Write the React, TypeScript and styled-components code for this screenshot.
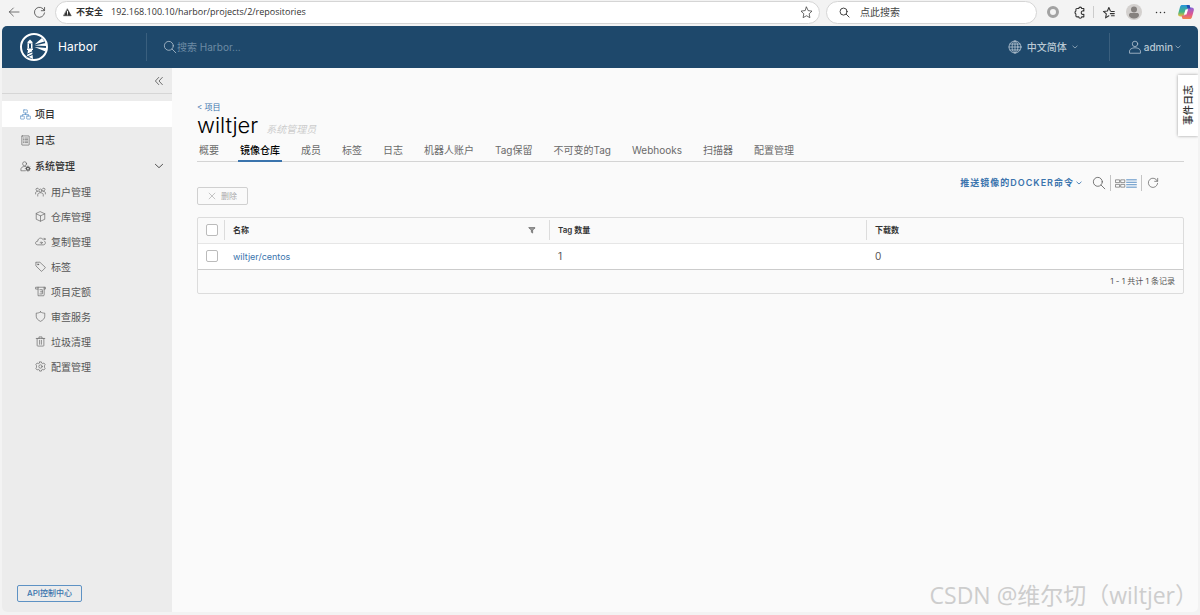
import React from "react";
import styled, { createGlobalStyle } from "styled-components";

const cjk = `"Noto Sans CJK SC", sans-serif`;

const GlobalStyle = createGlobalStyle`
  * { box-sizing: border-box; }
  body { margin: 0; background: #f3f3f3; color: #565656; font: 400 10px/16px Inter, ${cjk}; }
  button, input { font: inherit; color: inherit; }
  button { background: none; border: 0; padding: 0; cursor: pointer; }
  input { border: 0; background: none; padding: 0; min-width: 0; outline: none; }
  a { color: inherit; text-decoration: none; }
  ul { list-style: none; margin: 0; padding: 0; }
  h1 { margin: 0; }
`;

/* ---------- icons ---------- */

const Svg = styled.svg<{ $size: number; $weight?: number }>`
  display: block;
  flex: none;
  width: ${(p) => p.$size}px;
  height: ${(p) => p.$size}px;
  fill: none;
  stroke: currentColor;
  stroke-width: ${(p) => p.$weight ?? 2};
  stroke-linecap: round;
  stroke-linejoin: round;
`;

const shapes = {
  back: <path d="M33 18H4M16 6L4 18l12 12" />,
  reload: <path d="M31 12A14 14 0 1 0 32 19M32 4v9h-9" />,
  star: <path d="M18 3l4.600 9.800 10.600 1.400-7.800 7.400 2 10.600L18 27l-9.400 5.200 2-10.600L2.800 14.200l10.600-1.400z" />,
  search: (
    <>
      <circle cx="15" cy="15" r="11.500" />
      <path d="M23.500 23.500L33 33" />
    </>
  ),
  puzzle: <path d="M11 7h5a4 4 0 0 1 8 0h6v7a5 5 0 1 0 0 9v7h-6a4 4 0 0 1-8 0h-5a3 3 0 0 1-3-3v-5a4.500 4.500 0 0 1 0-8v-4a3 3 0 0 1 3-3z" />,
  favorites: (
    <path d="M19 27l-9 6 2-11-8-7 11-1 4-10 4 9M25 15h9M23 21h11M26 27h8" />
  ),
  globe: (
    <>
      <circle cx="18" cy="18" r="15.500" />
      <ellipse cx="18" cy="18" rx="7.500" ry="15.500" />
      <path d="M18 2.500v31M2.500 18h31M5 10.500h26M5 25.500h26" />
    </>
  ),
  user: (
    <>
      <circle cx="18" cy="10" r="7" />
      <path d="M4 33v-5c0-4 6-8 14-8s14 4 14 8v5z" />
    </>
  ),
  down: <path d="M5 12l13 12 13-12" />,
  collapse: <path d="M17 5L5 18l12 13M30 5L18 18l12 13" />,
  organization: (
    <>
      <rect x="12" y="3" width="12" height="10" rx="1" />
      <rect x="2" y="23" width="12" height="10" rx="1" />
      <rect x="22" y="23" width="12" height="10" rx="1" />
      <path d="M18 13v5M8 23v-5h20v5" />
    </>
  ),
  list: (
    <>
      <rect x="6" y="3" width="24" height="30" rx="1" />
      <path d="M11 10h2M11 15h2M11 20h2M11 25h2M17 10h8M17 15h8M17 20h8M17 25h8" />
    </>
  ),
  admin: (
    <>
      <circle cx="15" cy="9" r="6.500" />
      <path d="M17 32H3v-6c0-4 5-8 12-8 2 0 4 .500 5 1" />
      <circle cx="26" cy="25" r="5" strokeWidth="4" />
      <path d="M26 16v3M26 31v3M17 25h3M32 25h3M20 19l2 2M30 29l2 2M32 19l-2 2M22 29l-2 2" />
    </>
  ),
  users: (
    <>
      <circle cx="18" cy="15" r="5" />
      <path d="M9 33v-5c0-3 4-6 9-6s9 3 9 6v5" />
      <path d="M12 10a4.500 4.500 0 1 0-4 6M24 10a4.500 4.500 0 1 1 4 6M2 26v-4c0-2 2-4 6-4h2M34 26v-4c0-2-2-4-6-4h-2" />
    </>
  ),
  cube: <path d="M18 2.500L32 9v18l-14 6.500L4 27V9zM4 9l14 7 14-7M18 16v17" />,
  cloud: (
    <path d="M31 17c2 2 3 3 3 5 0 4-3 7-7 7H9c-4 0-7-2-7-6s3-6 7-6c0-6 4-10 9-10 3 0 5 1 7 3M17 22h7M21 19l3 3-3 3M27 10h7M31 7l3 3-3 3" />
  ),
  tag: (
    <>
      <path d="M3 5v11l17 17c1 1 2 1 3 0l10-10c1-1 1-2 0-3L16 4H4z" />
      <circle cx="10" cy="11" r="2" />
    </>
  ),
  quota: (
    <path d="M10 10H2V4h32v6h-4M10 4v28h17c2 0 3-1 3-3V4M16 12h8v14h-8M18 19h6" />
  ),
  shield: <path d="M18 3c4 3 9 4 14 4v10c0 8-6 13-14 17C10 30 4 25 4 17V7c5 0 10-1 14-4z" />,
  trash: <path d="M4 8h28M13 8V3h10v5M7 8v23c0 1 1 2 2 2h18c1 0 2-1 2-2V8M15 14v13M21 14v13" />,
  cog: (
    <>
      <circle cx="18" cy="18" r="5.500" />
      <path d="M15 3h6l1 4 3 1.500 4-2 4 5-2 4v5l2 4-4 5-4-2-3 1.500-1 4h-6l-1-4-3-1.500-4 2-4-5 2-4v-5l-2-4 4-5 4 2L14 7z" />
    </>
  ),
  close: <path d="M5 5l26 26M31 5L5 31" />,
  cards: (
    <path d="M3 6h12v9H3zM20 6h12v9H20zM3 21h12v9H3zM20 21h12v9H20z" />
  ),
  rows: <path d="M2 6h32M2 14h32M2 22h32M2 30h32" />,
};

type IconName = keyof typeof shapes;

const Icon = ({ name, size = 11, weight }: { name: IconName; size?: number; weight?: number }) => (
  <Svg $size={size} $weight={weight} viewBox="0 0 36 36" aria-hidden="true">
    {shapes[name]}
  </Svg>
);

const HarborLogo = () => (
  <Svg $size={30} viewBox="0 0 60 60" aria-hidden="true">
    <circle cx="30" cy="30" r="26" stroke="#fff" strokeWidth="4" />
    <g fill="#fff" stroke="none">
      <path d="M17 20l5-5 5 5v3H17zM16 33h12v3H16zM18 36h8l2 18-12-6z" />
      <path d="M17 23h3v10h-3zM24 23h3v10h-3z" />
      <path d="M31 25L46 12l5 7zM31 27l23-5 1 6zM31 30l24 2-2 7z" />
    </g>
    <path d="M17 44l9-4M16 50l11-5" stroke="#1e486b" strokeWidth="2" />
  </Svg>
);

const CopilotLogo = () => (
  <Svg $size={16} viewBox="0 0 32 32" aria-hidden="true">
    <defs>
      <linearGradient id="cool" x1="0" y1="0" x2="0" y2="1">
        <stop offset="0" stopColor="#2596dc" />
        <stop offset=".6" stopColor="#45b584" />
        <stop offset="1" stopColor="#f2bd35" />
      </linearGradient>
      <linearGradient id="warm" x1="0" y1="0" x2="0" y2="1">
        <stop offset="0" stopColor="#8a63d8" />
        <stop offset=".6" stopColor="#e0568f" />
        <stop offset="1" stopColor="#f2874b" />
      </linearGradient>
    </defs>
    <g stroke="none">
      <path d="M9 2h12c2 0 3 1 3 4l1 3h-4c-3 0-4 2-5 5l-3 7c-1 3-3 4-5 4H5c-4 0-6-3-4-8L4 6c1-3 2-4 5-4z" fill="url(#cool)" />
      <path d="M23 30H11c-2 0-3-1-3-4l-1-3h4c3 0 4-2 5-5l3-7c1-3 3-4 5-4h3c4 0 6 3 4 8l-3 11c-1 3-2 4-5 4z" fill="url(#warm)" />
      <path d="M17 2h4c2 0 3 1 3 4l1 3h-6z" fill="#234fb3" />
      <path d="M15 11h5l-3 10h-5z" fill="#fff" />
    </g>
  </Svg>
);

/* ---------- browser bar ---------- */

const Page = styled.div`
  min-height: 100vh;
  display: flex;
  flex-direction: column;
  padding: 0 2px 3px;
`;

const BrowserBar = styled.div`
  height: 26px;
  display: flex;
  align-items: center;
  gap: 6px;
  padding: 0 2px 2px;
  color: #333;
  font-family: "Open Sans", ${cjk};
`;

const BarButton = styled.button`
  display: grid;
  place-items: center;
  flex: none;
  width: 20px;
  height: 20px;
`;

const NavButtons = styled.div`
  display: flex;
  gap: 5px;
`;

const Pill = styled.label<{ $width?: number }>`
  display: flex;
  align-items: center;
  height: 23px;
  gap: ${(p) => (p.$width ? 10 : 4)}px;
  padding: 0 ${(p) => (p.$width ? 12 : 3)}px 0 ${(p) => (p.$width ? 12 : 7)}px;
  background: #fff;
  border: 1px solid #d5d5d5;
  border-radius: 12px;
  ${(p) => (p.$width ? `flex: none; width: ${p.$width}px;` : "flex: 1;")}
  input { flex: 1; }
  input::placeholder { color: #444; opacity: 1; }
`;

const Insecure = styled.strong`
  margin-right: 4px;
  font-weight: 700;
  font-size: 9px;
`;

const Address = styled.input`
  font-size: 9px;
`;

const BarTools = styled.div`
  display: flex;
  align-items: center;
  gap: 6px;
`;

const Ring = styled.span`
  width: 12px;
  height: 12px;
  border: 3px solid #a2a2a2;
  border-radius: 50%;
`;

const BarDivider = styled.span`
  width: 1px;
  height: 12px;
  margin: 0 -2px;
  background: #ccc;
`;

const Warning = () => (
  <Svg $size={9} viewBox="0 0 36 36" aria-hidden="true">
    <path d="M18 4l15 27H3z" fill="#333" stroke="#333" />
    <path d="M18 13v9M18 27v0" stroke="#fff" strokeWidth="4" />
  </Svg>
);

const Avatar = () => (
  <Svg $size={16} viewBox="0 0 32 32" aria-hidden="true">
    <g stroke="none">
      <circle cx="16" cy="16" r="16" fill="#d3d0ce" />
      <circle cx="16" cy="11" r="6" fill="#85817e" />
      <path d="M6 22c0-3 2-4 4-4h12c2 0 4 1 4 4 0 4-5 7-10 7S6 26 6 22z" fill="#85817e" />
    </g>
  </Svg>
);

const Dots = () => (
  <Svg $size={11} $weight={5} viewBox="0 0 36 36" aria-hidden="true">
    <path d="M5 18h0M18 18h0M31 18h0" />
  </Svg>
);

/* ---------- application shell ---------- */

const Shell = styled.div`
  position: relative;
  flex: 1;
  display: flex;
  flex-direction: column;
  border-radius: 5px;
  overflow: hidden;
  background: #fafafa;
`;

const Header = styled.header`
  height: 42px;
  display: flex;
  align-items: center;
  padding: 0 17px;
  background: #1e486b;
  color: #b9c8d4;
`;

const Brand = styled.a`
  width: 128px;
  height: 28px;
  display: flex;
  align-items: center;
  gap: 9px;
  border-right: 1px solid #3a5f7e;
  color: #fff;
  font-size: 12px;
`;

const HeaderSearch = styled.label`
  flex: 1;
  display: flex;
  align-items: center;
  margin-left: 16px;
  input { flex: 1; }
  input::placeholder { color: #6d8ba4; opacity: 1; }
`;

const HeaderMenu = styled.button<{ $gap: number }>`
  display: flex;
  align-items: center;
  gap: ${(p) => p.$gap}px;
  font-weight: 500;
`;

const HeaderDivider = styled.span`
  width: 1px;
  height: 28px;
  margin: 0 18px 0 31px;
  background: #3a5f7e;
`;

const Body = styled.div`
  flex: 1;
  display: flex;
`;

const Sidebar = styled.nav`
  width: 170px;
  flex: none;
  display: flex;
  flex-direction: column;
  align-items: flex-start;
  background: #ececec;
  ul { width: 100%; }
`;

const CollapseRow = styled.div`
  width: 100%;
  height: 26px;
  margin-bottom: 7px;
  padding-right: 8px;
  display: flex;
  align-items: center;
  justify-content: flex-end;
  border-bottom: 1px solid #d6d6d6;
`;

const NavLink = styled.a<{ $active?: boolean; $child?: boolean }>`
  display: flex;
  align-items: center;
  gap: ${(p) => (p.$child ? 5 : 4)}px;
  height: ${(p) => (p.$child ? 25 : 26)}px;
  padding: 0 8px 0 ${(p) => (p.$child ? 33 : 18)}px;
  background: ${(p) => (p.$active ? "#fff" : "transparent")};
  font-weight: ${(p) => (p.$child ? 400 : 500)};
  color: ${(p) => (p.$child ? "#565656" : "#333")};
  > svg:first-child { color: ${(p) => (p.$active ? "#4a86c0" : "#555")}; }
  > svg:last-child { margin-left: auto; }
`;

const ApiButton = styled.a`
  margin: auto 0 10px 15px;
  height: 17px;
  padding: 0 9px;
  border: 1px solid #5e92c4;
  border-radius: 2px;
  color: #3a74ad;
  font-size: 8px;
  line-height: 15px;
  font-weight: 500;
`;

/* ---------- project page ---------- */

const Main = styled.main`
  flex: 1;
  min-width: 0;
  padding: 32px 14px 0 25px;
`;

const Crumb = styled.a`
  display: block;
  height: 14px;
  color: #3a74ad;
  font-size: 8px;
  line-height: 15px;
`;

const TitleRow = styled.div`
  display: flex;
  align-items: baseline;
  gap: 8px;
  height: 24px;
`;

const Title = styled.h1`
  color: #000;
  font-size: 22px;
  line-height: 22px;
  font-weight: 300;
`;

const Role = styled.em`
  color: #ccc;
`;

const Tabs = styled.ul`
  display: flex;
  gap: 17px;
  height: 24px;
  border-bottom: 1px solid #d4d4d4;
`;

const Tab = styled.a<{ $active?: boolean }>`
  display: block;
  height: 24px;
  padding: 0 2px;
  line-height: 24px;
  white-space: nowrap;
  color: ${(p) => (p.$active ? "#000" : "#6a6a6a")};
  font-weight: ${(p) => (p.$active ? 500 : 400)};
  border-bottom: 2px solid ${(p) => (p.$active ? "#3a74ad" : "transparent")};
`;

const Toolbar = styled.div`
  display: flex;
  justify-content: space-between;
  height: 55px;
  padding-right: 25px;
`;

const DeleteButton = styled.button`
  display: flex;
  align-items: center;
  align-self: flex-end;
  gap: 5px;
  height: 18px;
  margin-bottom: 12px;
  padding: 0 10px;
  border: 1px solid #d0d0d0;
  border-radius: 2px;
  color: #aaa;
  font-size: 8px;
  line-height: 16px;
`;

const ToolGroup = styled.div`
  display: flex;
  align-items: center;
  height: 16px;
  margin-top: 13px;
  color: #666;
`;

const DockerButton = styled.button`
  display: flex;
  align-items: center;
  gap: 2px;
  margin-right: 10px;
  color: #3a74ad;
  font-size: 9px;
  font-weight: 600;
  letter-spacing: 1px;
`;

const ViewSwitch = styled.span`
  display: flex;
  height: 16px;
  align-items: center;
  margin: 0 5px 0 4px;
  padding: 0 4px;
  border: solid #c4c4c4;
  border-width: 0 1px;
`;

const ToolButton = styled.button<{ $on?: boolean }>`
  color: ${(p) => (p.$on ? "#4a86c0" : "#555")};
`;

const GridFrame = styled.div`
  border: 1px solid #dcdcdc;
  border-radius: 2px;
`;

const Grid = styled.table`
  width: 100%;
  table-layout: fixed;
  border-collapse: collapse;
  text-align: left;
  th, td { padding: 0 8px; height: 26px; }
  th { height: 25px; color: #333; font-size: 8px; font-weight: 600; border-bottom: 1px solid #e6e6e6; }
  td { background: #fff; border-bottom: 1px solid #ccc; }
  th:first-child { width: 26px; }
  th:nth-child(2) { width: 33%; }
  th > div { display: flex; align-items: center; justify-content: space-between; height: 20px; }
  th + th > div { margin-left: -8px; padding: 0 5px 0 8px; border-left: 1px solid #dcdcdc; }
  td:nth-child(n + 2) { padding-left: 9px; }
  a { color: #3a74ad; font-size: 9px; }
`;

const Check = styled.input.attrs({ type: "checkbox" })`
  appearance: none;
  display: block;
  width: 12px;
  height: 12px;
  margin: 0;
  border: 1px solid #bbb;
  border-radius: 2px;
  background: #fff;
`;

const GridFooter = styled.div`
  height: 23px;
  padding-right: 8px;
  text-align: right;
  font-size: 8px;
  line-height: 23px;
`;

const EventLog = styled.button`
  position: absolute;
  top: 49px;
  right: 0;
  width: 20px;
  height: 61px;
  background: #fff;
  box-shadow: 0 0 3px #999;
  color: #333;
  font-weight: 500;
  writing-mode: vertical-rl;
  text-orientation: sideways;
  span { display: block; transform: rotate(180deg); }
`;

const Watermark = styled.div`
  position: absolute;
  right: 0;
  bottom: 0;
  color: #cdcdcd;
  font: 400 23px/34px "Open Sans", ${cjk};
  white-space: nowrap;
  pointer-events: none;
`;

const children: [IconName, string][] = [
  ["users", "用户管理"],
  ["cube", "仓库管理"],
  ["cloud", "复制管理"],
  ["tag", "标签"],
  ["quota", "项目定额"],
  ["shield", "审查服务"],
  ["trash", "垃圾清理"],
  ["cog", "配置管理"],
];

const tabs = ["概要", "镜像仓库", "成员", "标签", "日志", "机器人账户", "Tag保留", "不可变的Tag", "Webhooks", "扫描器", "配置管理"];

export default function App() {
  return (
    <Page>
      <GlobalStyle />
      <BrowserBar>
        <NavButtons>
          <BarButton aria-label="后退"><Icon name="back" size={12} /></BarButton>
          <BarButton aria-label="刷新"><Icon name="reload" size={13} /></BarButton>
        </NavButtons>
        <Pill>
          <Warning />
          <Insecure>不安全</Insecure>
          <Address aria-label="地址" defaultValue="192.168.100.10/harbor/projects/2/repositories" />
          <BarButton aria-label="收藏"><Icon name="star" size={13} /></BarButton>
        </Pill>
        <Pill $width={211}>
          <Icon name="search" weight={3} />
          <input aria-label="网页搜索" placeholder="点此搜索" />
        </Pill>
        <BarTools>
          <BarButton aria-label="扩展图标"><Ring /></BarButton>
          <BarButton aria-label="扩展"><Icon name="puzzle" size={13} weight={3} /></BarButton>
          <BarDivider />
          <BarButton aria-label="收藏夹"><Icon name="favorites" size={13} weight={3} /></BarButton>
          <BarButton aria-label="用户"><Avatar /></BarButton>
          <BarButton aria-label="更多"><Dots /></BarButton>
          <BarButton aria-label="Copilot"><CopilotLogo /></BarButton>
        </BarTools>
      </BrowserBar>

      <Shell>
        <Header>
          <Brand href="#"><HarborLogo />Harbor</Brand>
          <HeaderSearch>
            <Icon name="search" size={14} />
            <input aria-label="搜索" placeholder="搜索 Harbor..." />
          </HeaderSearch>
          <HeaderMenu $gap={5}>
            <Icon name="globe" size={14} />中文简体<Icon name="down" size={6} weight={4} />
          </HeaderMenu>
          <HeaderDivider />
          <HeaderMenu $gap={2}>
            <Icon name="user" size={14} />admin<Icon name="down" size={6} weight={4} />
          </HeaderMenu>
        </Header>

        <Body>
          <Sidebar>
            <CollapseRow>
              <button aria-label="收起"><Icon name="collapse" size={10} weight={3} /></button>
            </CollapseRow>
            <ul>
              <li><NavLink href="#" $active><Icon name="organization" /><span>项目</span></NavLink></li>
              <li><NavLink href="#"><Icon name="list" /><span>日志</span></NavLink></li>
              <li>
                <NavLink href="#"><Icon name="admin" /><span>系统管理</span><Icon name="down" size={10} weight={3} /></NavLink>
                <ul>
                  {children.map(([icon, label]) => (
                    <li key={label}><NavLink href="#" $child><Icon name={icon} /><span>{label}</span></NavLink></li>
                  ))}
                </ul>
              </li>
            </ul>
            <ApiButton href="#">API控制中心</ApiButton>
          </Sidebar>

          <Main>
            <Crumb href="#">&lt; 项目</Crumb>
            <TitleRow>
              <Title>wiltjer</Title>
              <Role>系统管理员</Role>
            </TitleRow>
            <Tabs>
              {tabs.map((t, i) => (
                <li key={t}><Tab href="#" $active={i === 1}>{t}</Tab></li>
              ))}
            </Tabs>
            <Toolbar>
              <DeleteButton disabled><Icon name="close" size={8} weight={3} />删除</DeleteButton>
              <ToolGroup>
                <DockerButton>推送镜像的DOCKER命令<Icon name="down" size={6} weight={5} /></DockerButton>
                <ToolButton aria-label="搜索"><Icon name="search" size={14} /></ToolButton>
                <ViewSwitch>
                  <ToolButton aria-label="卡片视图"><Icon name="cards" /></ToolButton>
                  <ToolButton aria-label="列表视图" $on><Icon name="rows" weight={3} /></ToolButton>
                </ViewSwitch>
                <ToolButton aria-label="刷新"><Icon name="reload" size={12} /></ToolButton>
              </ToolGroup>
            </Toolbar>
            <GridFrame>
              <Grid>
                <thead>
                  <tr>
                    <th><Check aria-label="全选" /></th>
                    <th>
                      <div>
                        名称
                        <button aria-label="筛选">
                          <Svg $size={8} viewBox="0 0 36 36" aria-hidden="true">
                            <path d="M5 7h26v3l-10 8v14l-6-4V18L5 10z" fill="#999" />
                          </Svg>
                        </button>
                      </div>
                    </th>
                    <th><div>Tag 数量</div></th>
                    <th><div>下载数</div></th>
                  </tr>
                </thead>
                <tbody>
                  <tr>
                    <td><Check aria-label="选择 wiltjer/centos" /></td>
                    <td><a href="#">wiltjer/centos</a></td>
                    <td>1</td>
                    <td>0</td>
                  </tr>
                </tbody>
              </Grid>
              <GridFooter>1 - 1 共计 1 条记录</GridFooter>
            </GridFrame>
          </Main>
        </Body>
        <EventLog><span>事件日志</span></EventLog>
        <Watermark>CSDN @维尔切（wiltjer）</Watermark>
      </Shell>
    </Page>
  );
}
